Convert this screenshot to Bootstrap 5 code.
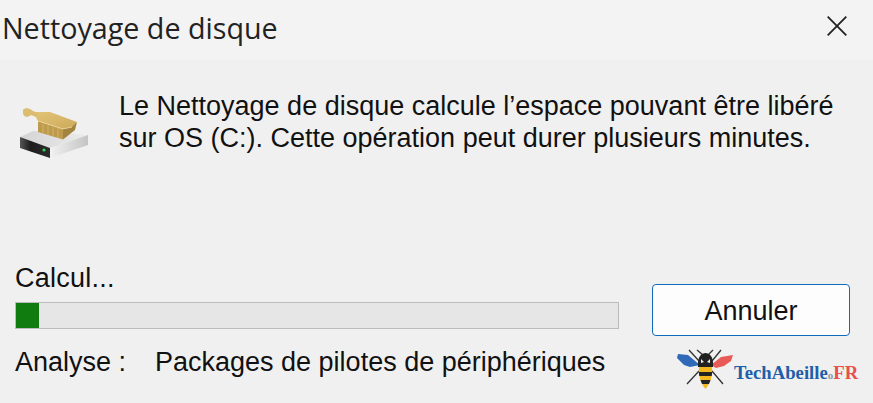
<!DOCTYPE html>
<html lang="fr">
<head>
<meta charset="utf-8">
<title>Nettoyage de disque</title>
<link rel="stylesheet" href="https://cdn.jsdelivr.net/npm/bootstrap@5.3.0/dist/css/bootstrap.min.css">
<style>
html,body{height:403px;overflow:hidden}
body{background:#f0f0f0;color:#111;font-family:"Liberation Sans",Arial,sans-serif;font-size:27px;line-height:33px}
.dlg-title{height:60px;background:#f3f3f3;padding:0 26px 0 2px}
.dlg-title-text{font-family:"Open Sans",sans-serif;font-size:28.7px;line-height:56px;color:#222}
.dlg-close{margin-top:16px}
.dlg-msg{height:167px;padding:44px 0 0 18px}
.dlg-icon{width:72px;height:56px;margin-right:29px}
.dlg-text{width:740px;line-height:32px;margin-top:-14px}
.dlg-left{width:604px;margin-left:15px}
.dlg-calc{line-height:30px;height:30px;margin-top:36px;margin-bottom:9px;letter-spacing:.25px}
.dlg-bar{height:27px;border-radius:0;background:#e6e6e6;border:1px solid #bcbcbc}
.dlg-bar .progress-bar{background:#107c10;width:23px}
.dlg-an{margin-top:18px;line-height:30px;white-space:nowrap}
.dlg-an-label{display:inline-block;width:140px}
.dlg-right{margin-left:33px;width:198px}
.dlg-btn{display:block;width:198px;height:52px;margin-top:57px;background:#fdfdfd;border:1px solid #0f6cbd;border-radius:4px;color:#111;font-size:27px;line-height:30px;padding:2px 0 0}
.dlg-btn:hover{background:#fff;border-color:#0f6cbd;color:#111}
.dlg-logo{margin-top:12px;margin-left:25px;width:190px;height:42px}
.dlg-bee{width:56px;height:42px;flex:none}
.dlg-logo-text{font-family:"Liberation Serif",serif;font-weight:700;font-size:18.7px;line-height:24px;color:#1f5ea8;margin-left:1px;margin-top:13px;white-space:nowrap}
.dlg-logo-dot{color:#8a9aa8;font-size:11px}
.dlg-logo-fr{color:#e8504a}
</style>
</head>
<body>
<header class="dlg-title d-flex justify-content-between align-items-start">
  <div class="dlg-title-text">Nettoyage de disque</div>
  <svg class="dlg-close" width="20" height="20" viewBox="0 0 20 20" aria-label="Fermer"><path d="M.7 .7 L19.3 19.3 M19.3 .7 L.7 19.3" stroke="#222" stroke-width="1.8" fill="none"/></svg>
</header>
<main class="dlg-msg d-flex align-items-start">
  <svg class="dlg-icon" viewBox="18 104 72 56">
    <defs>
      <linearGradient id="d1" x1="0" y1="0" x2="1" y2="0"><stop offset="0" stop-color="#d4d4d4"/><stop offset="1" stop-color="#ececec"/></linearGradient>
      <linearGradient id="d2" x1="0" y1="0" x2="1" y2="0"><stop offset="0" stop-color="#f2f2f2"/><stop offset="1" stop-color="#c4c4c4"/></linearGradient>
      <linearGradient id="d3" x1="0" y1="0" x2="1" y2="0"><stop offset="0" stop-color="#555"/><stop offset=".35" stop-color="#1d1d1d"/><stop offset="1" stop-color="#2c2c2c"/></linearGradient>
      <linearGradient id="b1" x1="0" y1="0" x2="1" y2="1"><stop offset="0" stop-color="#e2c578"/><stop offset="1" stop-color="#cda95a"/></linearGradient>
    </defs>
    <path d="M20 137 L33 131 L88 135 L50 148Z" fill="url(#d1)"/>
    <path d="M20 137 L50 148 L50 158 L20 148Z" fill="url(#d3)"/>
    <path d="M50 148 L88 135 L88 145 L50 158Z" fill="url(#d2)"/>
    <circle cx="44" cy="150" r="1.6" fill="#35d04f"/>
    <path d="M38 121 L63 129 L63 139.500 L38 132Z" fill="#bd9a4c"/>
    <path d="M43 124 V133 M48 125 V135 M53 127 V136 M58 128 V138" stroke="#d3b368" stroke-width="1"/>
    <path d="M63 129 L77 122 L75 130 L63 139.500Z" fill="#a3843f"/>
    <path d="M33 112 L50 112 L77 122 L72 127 L63 129 L38 121Z" fill="url(#b1)"/>
    <path d="M38 121 L63 129 L72 127" stroke="#f0dc9f" stroke-width=".8" fill="none"/>
    <path d="M23 110 C25 107 30 108 33 111 L38 113 L36 117 L31 115 C28 118 23 117 23 113Z" fill="#dcbd6f"/>
  </svg>
  <p class="dlg-text mb-0">Le Nettoyage de disque calcule l’espace pouvant être libéré<br>sur OS (C:). Cette opération peut durer plusieurs minutes.</p>
</main>
<section class="d-flex">
  <div class="dlg-left">
    <div class="dlg-calc">Calcul...</div>
    <div class="progress dlg-bar"><div class="progress-bar"></div></div>
    <div class="dlg-an"><span class="dlg-an-label">Analyse :</span>Packages de pilotes de périphériques</div>
  </div>
  <div class="dlg-right">
    <button type="button" class="btn dlg-btn">Annuler</button>
    <div class="dlg-logo d-flex align-items-start">
      <svg class="dlg-bee" viewBox="677 349 56 42">
        <path d="M700 366 L688 356 L678 355 L677 359 L684 366 L690 368Z" fill="#2f69b8"/>
        <path d="M711 366 L721 358 L733 356 L731 362 L724 367 L716 369Z" fill="#e85a55"/>
        <path d="M703 356 L697 351 M708 356 L713 351 M699 362 L689 351 M712 362 L721 351 M699 372 L687 385 M712 372 L723 385" stroke="#333" stroke-width="1.3" fill="none"/>
        <path d="M699 368 C698 376 701 385 705.500 390 C710 385 713 376 712 368Z" fill="#f2b61e"/>
        <path d="M698 368 C697 357 702 354 705.500 354 C709 354 714 357 713 368Z" fill="#222"/>
        <path d="M701 360 L704 363 L701 364Z M710 360 L707 363 L710 364Z" fill="#eee"/>
        <path d="M698.700 373 H712.300 L711.700 377 H699.300Z M700.500 381 H710.500 L709 385 H702Z" fill="#222"/>
      </svg>
      <div class="dlg-logo-text">TechAbeille<span class="dlg-logo-dot">o</span><span class="dlg-logo-fr">FR</span></div>
    </div>
  </div>
</section>
<script src="https://cdn.jsdelivr.net/npm/bootstrap@5.3.0/dist/js/bootstrap.bundle.min.js"></script>
</body>
</html>
